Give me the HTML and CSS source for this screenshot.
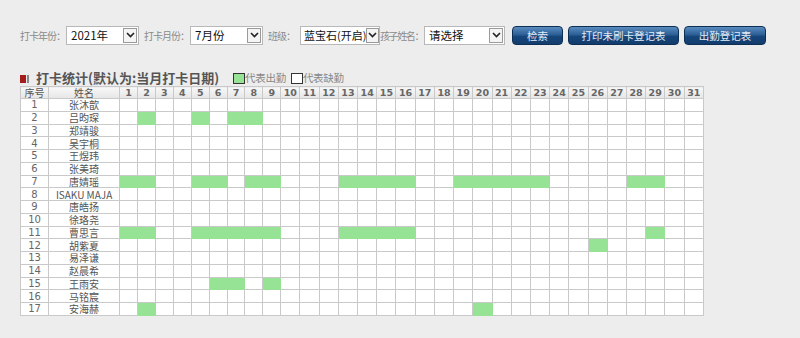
FILE: index.html
```html
<!DOCTYPE html>
<html lang="zh-CN">

<head>
    <meta charset="UTF-8">
    <meta name="viewport" content="width=device-width, initial-scale=1.0">
    <title>打卡统计</title>
    <link rel="stylesheet" href="styles.css">
</head>

<body>
    <div class="toolbar">
        <span class="label">打卡年份：</span>
        <div class="select year">
            <span class="val">2021年</span>
            <span class="arrow"><svg width="9" height="6" viewBox="0 0 9 6"><path d="M1 1 L4.5 4.5 L8 1" fill="none" stroke="#222" stroke-width="1.6"/></svg></span>
        </div>
        <span class="label">打卡月份：</span>
        <div class="select month">
            <span class="val">7月份</span>
            <span class="arrow"><svg width="9" height="6" viewBox="0 0 9 6"><path d="M1 1 L4.5 4.5 L8 1" fill="none" stroke="#222" stroke-width="1.6"/></svg></span>
        </div>
        <span class="label">班级：</span>
        <div class="select klass">
            <span class="val">蓝宝石(开启)</span>
            <span class="arrow"><svg width="9" height="6" viewBox="0 0 9 6"><path d="M1 1 L4.5 4.5 L8 1" fill="none" stroke="#222" stroke-width="1.6"/></svg></span>
        </div>
        <span class="label tight">孩子姓名：</span>
        <div class="select kid">
            <span class="val">请选择</span>
            <span class="arrow"><svg width="9" height="6" viewBox="0 0 9 6"><path d="M1 1 L4.5 4.5 L8 1" fill="none" stroke="#222" stroke-width="1.6"/></svg></span>
        </div>
        <button class="btn b-search">检索</button>
        <button class="btn b-print">打印未刷卡登记表</button>
        <button class="btn b-attend">出勤登记表</button>
    </div>

    <div class="title-bar">
        <span class="mark"><i class="red"></i><i class="gray"></i></span>
        <span class="title">打卡统计(默认为:当月打卡日期)</span>
        <span class="legend"><i class="box on"></i>代表出勤<i class="box off"></i>代表缺勤</span>
    </div>

    <table class="grid">
        <colgroup id="cols"></colgroup>
        <thead>
            <tr id="head"></tr>
        </thead>
        <tbody id="tbody"></tbody>
    </table>

    <script>
        let kids = [
            { name: '张沐歆', days: [] },
            { name: '吕昀琛', days: [2, 5, 7, 8] },
            { name: '郑靖骏', days: [] },
            { name: '吴宇桐', days: [] },
            { name: '王煜玮', days: [] },
            { name: '张美琦', days: [] },
            { name: '唐婧瑶', days: [1, 2, 5, 6, 8, 9, 13, 14, 15, 16, 19, 20, 21, 22, 23, 28, 29] },
            { name: 'ISAKU MAJA', days: [] },
            { name: '唐皓扬', days: [] },
            { name: '徐珞尧', days: [] },
            { name: '曹思言', days: [1, 2, 5, 6, 7, 8, 9, 13, 14, 15, 16, 29] },
            { name: '胡紫夏', days: [26] },
            { name: '易泽谦', days: [] },
            { name: '赵晨希', days: [] },
            { name: '王雨安', days: [6, 7, 9] },
            { name: '马铭宸', days: [] },
            { name: '安海赫', days: [2, 20] }
        ];

        let cols = '<col class="c-no"><col class="c-name">';
        let head = '<th>序号</th><th>姓名</th>';
        for (let d = 1; d <= 31; d++) {
            cols += d < 10 ? '<col class="c-d1">' : '<col class="c-d2">';
            head += `<th class="num">${d}</th>`;
        }
        document.getElementById("cols").innerHTML = cols;
        document.getElementById("head").innerHTML = head;

        let rows = '';
        kids.forEach(function (item, i) {
            rows += `<tr><td class="no">${i + 1}</td><td class="name">${item.name}</td>`;
            for (let d = 1; d <= 31; d++) {
                rows += item.days.includes(d) ? '<td class="on"></td>' : '<td></td>';
            }
            rows += '</tr>';
        });
        document.getElementById("tbody").innerHTML = rows;
    </script>
</body>

</html>
```

FILE: styles.css
```css
* {
    padding: 0;
    margin: 0;
    box-sizing: border-box;
}

body {
    background: #ededed;
    font-family: "Noto Sans CJK SC", "DejaVu Sans", sans-serif;
    color: #444;
    padding: 0 20px;
}

.toolbar {
    display: flex;
    align-items: center;
    height: 20px;
    margin-top: 25px;
}

.label {
    font-size: 10px;
    letter-spacing: -1px;
    color: #8a8a8a;
    margin-right: 1px;
    white-space: nowrap;
}

.label.tight {
    letter-spacing: -1.4px;
}

.select {
    display: flex;
    align-items: center;
    justify-content: space-between;
    height: 19px;
    background: #fff;
    border: 1px solid #b8b8b8;
    padding-left: 4px;
    margin-right: 5px;
    font-size: 11.5px;
    color: #111;
    overflow: hidden;
}

.select .val {
    white-space: nowrap;
}

.select .arrow {
    display: flex;
    flex-shrink: 0;
    align-items: center;
    justify-content: center;
    width: 14px;
    height: 15px;
    margin-right: 1px;
    border: 1px solid #9a9a9a;
    background: #f4f4f4;
}

.year {
    width: 73px;
}

.month {
    width: 73px;
}

.klass {
    width: 80px;
    margin-left: 4px;
    padding-left: 3px;
    margin-right: 0;
    font-size: 11px;
}

.klass .arrow {
    width: 13px;
    margin-right: 0;
}

.kid {
    width: 81px;
}

.btn {
    height: 19px;
    border: 1px solid #0e2f55;
    border-radius: 4px;
    background: linear-gradient(#5a8cc0 0%, #2c5f96 45%, #17467c 55%, #123c6c 100%);
    color: #e4ecf6;
    font-family: "Noto Sans CJK SC", sans-serif;
    font-size: 10.5px;
    cursor: pointer;
    margin-left: 5px;
}

.b-search {
    width: 51px;
    margin-left: 2px;
}

.b-print {
    width: 111px;
}

.b-attend {
    width: 82px;
}

.title-bar {
    display: flex;
    align-items: flex-end;
    height: 20px;
    margin-top: 21px;
}

.mark {
    display: flex;
    align-items: center;
    height: 14px;
    margin-right: 7px;
}

.mark .red {
    display: block;
    width: 6px;
    height: 8px;
    background: #a51c1c;
}

.mark .gray {
    display: block;
    width: 2px;
    height: 8px;
    margin-left: 1px;
    background: #888;
}

.title {
    font-size: 13px;
    font-weight: bold;
    color: #555;
    line-height: 16px;
    white-space: nowrap;
}

.legend {
    display: flex;
    align-items: flex-end;
    margin-left: 14px;
    margin-bottom: 2px;
    font-size: 10.5px;
    color: #888;
    line-height: 12px;
    letter-spacing: -0.3px;
}

.legend .box {
    display: block;
    width: 12px;
    height: 11px;
    border: 1px solid #333;
    background: #fff;
}

.legend .box.on {
    background: #96e396;
}

.legend .box.off {
    margin-left: 5px;
}

table.grid {
    table-layout: fixed;
    width: 684px;
    border-collapse: collapse;
    background: #fff;
    border: 1px solid #c9c9c9;
}

.c-no {
    width: 28px;
}

.c-name {
    width: 71px;
}

.c-d1 {
    width: 17.9px;
}

.c-d2 {
    width: 19.2px;
}

.grid th,
.grid td {
    border: 1px solid #c9c9c9;
    text-align: center;
    padding: 0;
}

.grid th {
    height: 12px;
    line-height: 11px;
    font-size: 10px;
    font-weight: normal;
    color: #555;
    background: linear-gradient(#f7f7f7, #e6e6e6);
}

.grid th.num {
    font-family: "DejaVu Sans", sans-serif;
    font-weight: bold;
    font-size: 9.5px;
    color: #666;
}

.grid td {
    height: 12.75px;
    line-height: 11px;
    font-size: 10px;
    color: #555;
}

.grid td.no {
    font-family: "DejaVu Sans", sans-serif;
    font-size: 10px;
    color: #666;
}

.grid td.on {
    background: #96e396;
    border-color: #96e396;
}
```
